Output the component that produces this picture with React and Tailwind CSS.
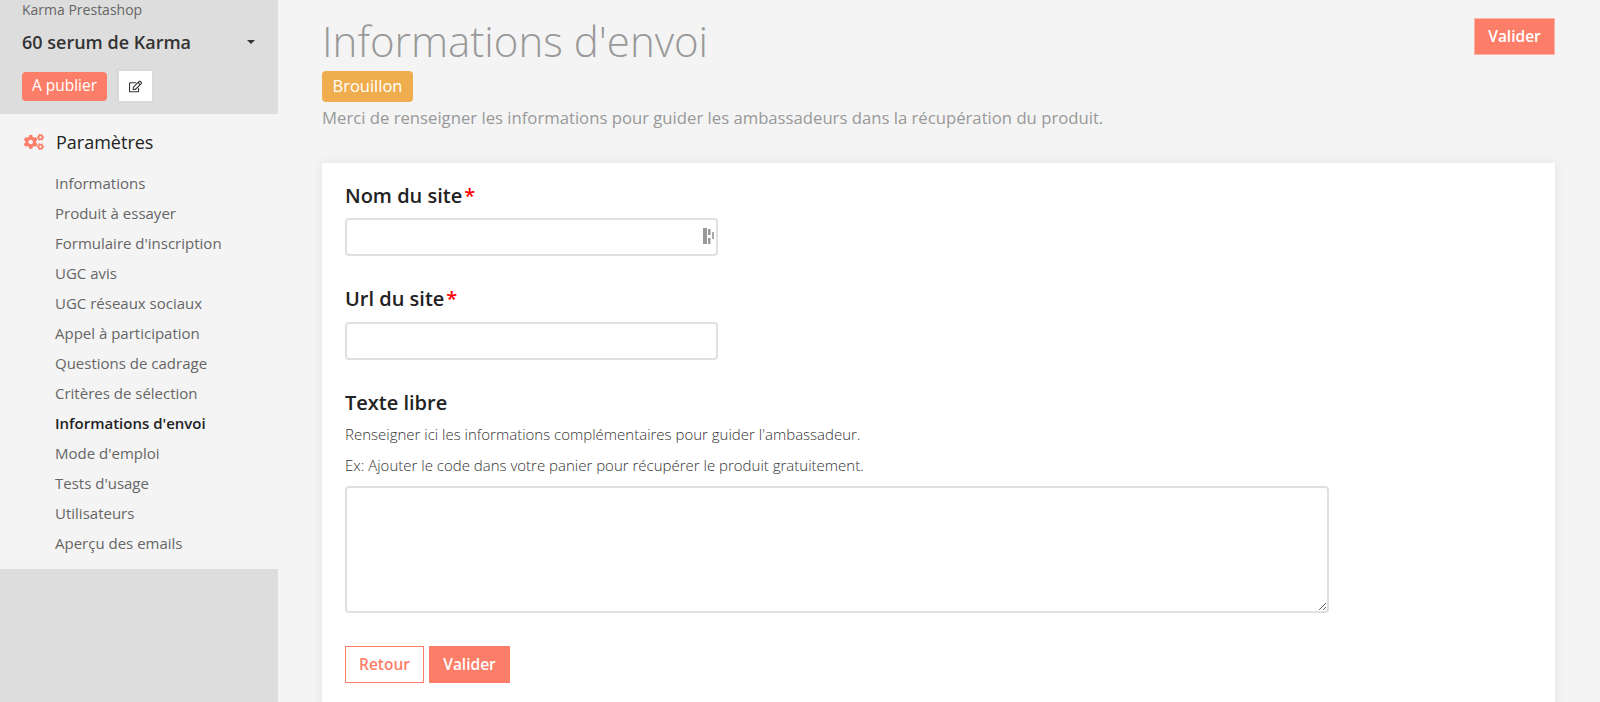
import { FaRegEdit, FaCogs } from "react-icons/fa";

const NAV_ITEMS = [
  "Informations",
  "Produit à essayer",
  "Formulaire d'inscription",
  "UGC avis",
  "UGC réseaux sociaux",
  "Appel à participation",
  "Questions de cadrage",
  "Critères de sélection",
  "Informations d'envoi",
  "Mode d'emploi",
  "Tests d'usage",
  "Utilisateurs",
  "Aperçu des emails",
];

function Required() {
  return <span className="text-[#ff0000] ml-[2px]">*</span>;
}

export default function App() {
  return (
    <div className="flex h-[702px] overflow-hidden bg-[#f4f4f4] font-['Open_Sans',sans-serif]">
      <aside className="w-[278px] shrink-0 flex flex-col bg-[#dddddd]">
        <div className="h-[114px] pl-[22px] pr-[22px]">
          <p className="text-[14px] leading-[20px] text-[#666666]">Karma Prestashop</p>
          <div className="flex items-center justify-between mt-[10px] h-[24px]">
            <span className="text-[18px] font-semibold text-[#333333]">60 serum de Karma</span>
            <span className="w-0 h-0 mr-[1px] border-x-[4px] border-x-transparent border-t-[4px] border-t-[#333333]"></span>
          </div>
          <div className="flex items-center gap-[10px] mt-[15px]">
            <span className="w-[85px] h-[29px] flex items-center justify-center rounded-[4px] bg-[#fd7e68] text-white text-[15.5px]">
              A publier
            </span>
            <span className="w-[37px] h-[34px] flex items-center justify-center bg-white border-2 border-[#d9d9d9]">
              <FaRegEdit className="text-[#333333] text-[13px]" />
            </span>
          </div>
        </div>
        <nav className="bg-[#f4f4f4] h-[455px]">
          <div className="flex items-center h-[30px] mt-[13px] pl-[24px]">
            <FaCogs className="text-[#fd7e68] text-[20px]" />
            <span className="ml-[12px] text-[18px] text-[#222222]">Paramètres</span>
          </div>
          <ul className="mt-[11px] pl-[55px]">
            {NAV_ITEMS.map((item) => (
              <li
                key={item}
                className={
                  item === "Informations d'envoi"
                    ? "h-[30px] leading-[30px] text-[15px] font-semibold text-[#222222]"
                    : "h-[30px] leading-[30px] text-[15px] text-[#666666]"
                }
              >
                {item}
              </li>
            ))}
          </ul>
        </nav>
      </aside>

      <main className="flex-1 pl-[44px] pr-[45px]">
        <div className="flex justify-between items-start">
          <div>
            <h1 className="text-[42px] leading-[60px] mt-[11px] font-light text-[#999999]">Informations d'envoi</h1>
            <span className="inline-flex items-center justify-center w-[91px] h-[31px] rounded-[4px] bg-[#f0ad4e] text-white text-[16.5px]">
              Brouillon
            </span>
            <p className="text-[16.7px] leading-[22px] mt-[5px] text-[#999999]">
              Merci de renseigner les informations pour guider les ambassadeurs dans la récupération du produit.
            </p>
          </div>
          <button className="w-[81px] h-[37px] mt-[18px] bg-[#fd7e68] border border-[#fdb4a6] text-white text-[15.5px] font-semibold">
            Valider
          </button>
        </div>

        <section className="bg-white mt-[34px] h-[560px] px-[23px] pt-[20px] shadow-[0_0_10px_rgba(0,0,0,0.08)]">
          <label className="block text-[20px] leading-[26px] font-semibold text-[#222222]">
            Nom du site
            <Required />
          </label>
          <div className="relative w-[373px] mt-[9px]">
            <input className="block w-full h-[38px] rounded-[4px] bg-white border-2 border-[#e0e0e0] outline-none" />
            <svg className="absolute right-[3px] top-[10px]" width="12" height="17" viewBox="0 0 12 17">
              <rect x="0" y="0" width="4" height="16" fill="#999999" />
              <rect x="5" y="1" width="2.5" height="6" fill="#999999" />
              <rect x="5" y="10" width="2.5" height="6" fill="#999999" />
              <rect x="9" y="4" width="2" height="7" fill="#aaaaaa" />
            </svg>
          </div>

          <label className="block mt-[30px] text-[20px] leading-[26px] font-semibold text-[#222222]">
            Url du site
            <Required />
          </label>
          <input className="block w-[373px] h-[38px] mt-[10px] rounded-[4px] bg-white border-2 border-[#e0e0e0] outline-none" />

          <label className="block mt-[30px] text-[20px] leading-[26px] font-semibold text-[#222222]">Texte libre</label>
          <p className="mt-[8px] text-[15px] leading-[20px] font-light text-[#333333]">
            Renseigner ici les informations complémentaires pour guider l'ambassadeur.
          </p>
          <p className="mt-[11px] text-[15px] leading-[20px] font-light text-[#333333]">
            Ex: Ajouter le code dans votre panier pour récupérer le produit gratuitement.
          </p>
          <textarea className="block w-[984px] h-[127px] mt-[11px] rounded-[4px] bg-white border-2 border-[#e0e0e0] outline-none"></textarea>

          <div className="flex gap-[5px] mt-[33px]">
            <button className="w-[79px] h-[37px] bg-white border border-[#fd7e68] text-[#fd7e68] text-[15.5px] font-semibold">
              Retour
            </button>
            <button className="w-[81px] h-[37px] bg-[#fd7e68] text-white text-[15.5px] font-semibold">Valider</button>
          </div>
        </section>
      </main>
    </div>
  );
}
